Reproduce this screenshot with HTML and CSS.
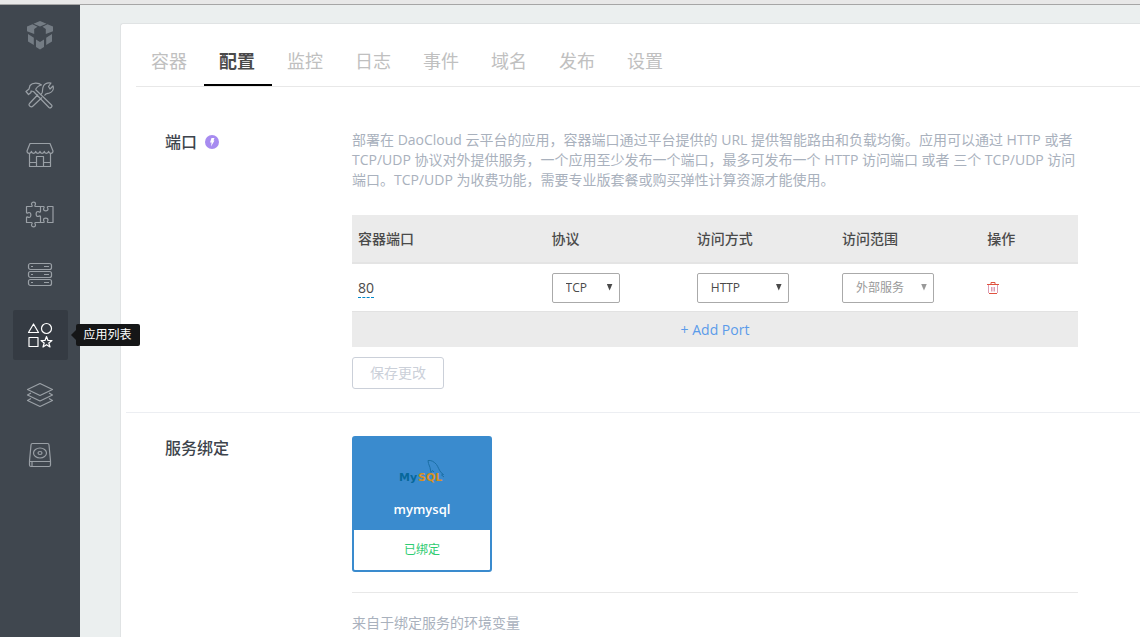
FILE: index.html
```html
<!DOCTYPE html>
<html lang="zh-CN">
<head>
<meta charset="utf-8">
<title>DaoCloud</title>
<link rel="stylesheet" href="styles.css">
</head>
<body>
<div class="topbar"></div>
<div class="app">
  <nav class="sidebar" aria-label="主导航">
    <a class="nav-item brand" href="#" aria-label="DaoCloud">
      <svg width="26" height="29" viewBox="0 0 26 29"><path d="M13 0l6.500 2.700L13 5.500 6.500 2.700zM0 5.500l5.500-2.300 5 2.600L7.200 8v5L0 10.200zM26 5.500l-5.500-2.300-5 2.600L18.800 8v5L26 10.200zM1 13l5.800 3.800V24L1 20.500zM25 13v7.500L19.200 24v-7.200zM9 18.500l4 2.500 4-2.500V26l-4 2.500L9 26z"/></svg>
    </a>
    <a class="nav-item" href="#" aria-label="构建">
      <svg width="30" height="28" viewBox="0 0 30 28"><path d="M10.500 8.500l16 15.500c1.400 1.500-1 3.800-2.500 2.500L8.500 10.500M10.500 8.500C12 6 13 4.500 16.500 4c-3-2.500-9-2.500-11.500.5L4 8 1 10.500 3.500 13.500 6 11.500l0-1.500 2.500 .5M17 12c1-2 0-4 1.500-7S23 1.500 26 2l-2.500 3.500L25 8l3-3c1 3-.5 6-3.500 7-2 .7-3.500 0-5 2.500M13 13.500l-8.500 9c-1.500 2 1.500 4.500 3.500 2.500l9-8.500M17 12l-1.500 2"/></svg>
    </a>
    <a class="nav-item" href="#" aria-label="镜像仓库">
      <svg width="28" height="26" viewBox="0 0 28 26"><path d="M4 1.500h20l3 7.500c0 3-4 3-4.400.4-.5 2.600-4 2.600-4.300 0-.5 2.600-4 2.600-4.300 0-.4 2.600-3.900 2.600-4.300 0-.4 2.600-3.900 2.600-4.300 0C5 12 1 12 1 9zM3.500 11.500v13h21v-13M10.500 24v-9.500h7V24M3.500 20.500h7M17.500 20.500h7"/></svg>
    </a>
    <a class="nav-item" href="#" aria-label="服务集成">
      <svg width="30" height="28" viewBox="0 0 30 28"><path d="M1.500 5.500h5c1.500-.5 0-1.500 0-2.500 0-2.500 4-2.500 4 0 0 1-1.500 2 0 2.500h8c1.500.5 0 1.500 0 2.500 0 2.500 4.500 2.500 4.500 0 0-1-1.500-2 0-2.500h5v16h-5c-1.500-.5 0-1.500 0-2.500 0-2.500-4.500-2.500-4.500 0 0 1 1.500 2 0 2.500h-8c-1.500.5 0 1.500 0 2.500 0 2.500-4 2.500-4 0 0-1 1.500-2 0-2.500h-5v-5c.5-1.500 1.500 0 2.500 0 2.500 0 2.500-5 0-5-1 0-2 1.500-2.500 0zM15.500 5.500v5c-.5 1.500-1.500 0-2.500 0-2.500 0-2.500 5 0 5 1 0 2-1.500 2.500 0v6"/></svg>
    </a>
    <a class="nav-item" href="#" aria-label="主机">
      <svg width="26" height="26" viewBox="0 0 26 26"><rect x="1.500" y="1.500" width="23" height="6" rx="2"/><rect x="1.500" y="9.500" width="23" height="6" rx="2"/><rect x="1.500" y="17.500" width="23" height="6" rx="2"/><path d="M4 4.500h2M17 4.500h5M4 12.500h2M17 12.500h5M4 20.500h2M17 20.500h5"/></svg>
    </a>
    <a class="nav-item active" href="#" aria-current="page" aria-describedby="nav-tip">
      <svg width="26" height="26" viewBox="0 0 26 26"><path d="M6.500 2l5 8.500h-10z"/><circle cx="19.500" cy="6.500" r="5"/><rect x="2" y="15.500" width="9" height="9"/><path d="M19.500 14.500l1.500 4h4l-3.200 2.500 1.200 4-3.500-2.300L16 25l1.200-4-3.200-2.500h4z"/></svg>
      <span class="tooltip" id="nav-tip" role="tooltip">应用列表</span>
    </a>
    <a class="nav-item" href="#" aria-label="堆栈">
      <svg width="28" height="26" viewBox="0 0 28 26"><path d="M14 1.500l12.500 6L14 13.500l-12.500-6zM5 11l-3.500 2L14 19l12.500-6L23 11M5 16.500l-3.500 2L14 24.500l12.500-6-3.500-2"/></svg>
    </a>
    <a class="nav-item" href="#" aria-label="存储">
      <svg width="24" height="26" viewBox="0 0 24 26"><path d="M4.500 1.500h15c1 0 1.500.5 1.500 1.500l1.500 16v4c0 1-.5 1.500-1.500 1.500H3c-1 0-1.500-.5-1.500-1.500v-4L3 3c0-1 .5-1.500 1.500-1.500zM1.500 19.500h21M4 20v4"/><ellipse cx="12" cy="11" rx="6.500" ry="5"/><ellipse cx="12" cy="11" rx="2" ry="1.500"/></svg>
    </a>
  </nav>
  <main class="main">
    <div class="panel">
      <nav class="tabs" aria-label="应用">
        <a class="tab" href="#">容器</a>
        <a class="tab selected" href="#" aria-current="page">配置</a>
        <a class="tab" href="#">监控</a>
        <a class="tab" href="#">日志</a>
        <a class="tab" href="#">事件</a>
        <a class="tab" href="#">域名</a>
        <a class="tab" href="#">发布</a>
        <a class="tab" href="#">设置</a>
      </nav>

      <section class="section">
        <h2 class="section-title">端口
          <svg class="bolt" width="14" height="14" viewBox="0 0 14 14"><circle cx="7" cy="7" r="7"/><path d="M6.500 3h3L8.500 5.500h1L6 11.500l.6-4H5z"/></svg>
        </h2>
        <div class="section-body">
          <p class="description">部署在 DaoCloud 云平台的应用，容器端口通过平台提供的 URL 提供智能路由和负载均衡。应用可以通过 HTTP 或者 TCP/UDP 协议对外提供服务，一个应用至少发布一个端口，最多可发布一个 HTTP 访问端口 或者 三个 TCP/UDP 访问端口。TCP/UDP 为收费功能，需要专业版套餐或购买弹性计算资源才能使用。</p>
          <table class="ports">
            <colgroup><col class="col-port"><col class="col-option"><col class="col-option"><col class="col-option"><col class="col-action"></colgroup>
            <thead>
              <tr><th>容器端口</th><th>协议</th><th>访问方式</th><th>访问范围</th><th>操作</th></tr>
            </thead>
            <tbody>
              <tr>
                <td><a class="port" href="#">80</a></td>
                <td><span class="select narrow"><select aria-label="协议"><option>TCP</option><option>UDP</option></select></span></td>
                <td><span class="select"><select aria-label="访问方式"><option>HTTP</option></select></span></td>
                <td><span class="select disabled"><select aria-label="访问范围" disabled><option>外部服务</option></select></span></td>
                <td><button class="delete" type="button" aria-label="删除"><svg width="12" height="12" viewBox="0 0 12 12"><path class="bin" d="M1.500 3v8M10.500 3v8M4.500 5v4.500M6 5v4.500M7.500 5v4.500"/><path d="M0 2.500h12M4 2V.5h4V2M2 11.500h8"/></svg></button></td>
              </tr>
            </tbody>
            <tfoot>
              <tr><td colspan="5"><button class="add" type="button">+ Add Port</button></td></tr>
            </tfoot>
          </table>
          <button class="save" type="button" disabled>保存更改</button>
        </div>
      </section>

      <section class="section services">
        <h2 class="section-title">服务绑定</h2>
        <div class="section-body">
          <a class="service" href="#">
            <span class="service-top">
              <svg class="logo" width="46" height="28" viewBox="0 0 46 28"><path class="dolphin" d="M32 13.500l-1-5-1.500-4-.5-3c3-.5 6 1 8.500 4 2 3 2.500 5.500 4.500 8l2.500 2-2 .5 2.500 2M32 13.500l1.500-2 1.500 1.500"/><text class="my" x="0" y="22">My</text><text class="sql" x="19" y="22">SQL</text></svg>
              <span class="service-name">mymysql</span>
            </span>
            <span class="service-state">已绑定</span>
          </a>
          <p class="env">来自于绑定服务的环境变量</p>
        </div>
      </section>
    </div>
  </main>
</div>
</body>
</html>
```
FILE: styles.css
```css
* { box-sizing: border-box; }

body {
  margin: 0;
  min-height: 100vh;
  display: flex;
  flex-direction: column;
  overflow: hidden;
  font-family: "Open Sans", "Noto Sans CJK SC", sans-serif;
  font-size: 14px;
  line-height: 20px;
  color: #4a4a4a;
  background: #ebefef;
}

a { color: inherit; text-decoration: none; }
button, select { font: inherit; color: inherit; }
p, h2 { margin: 0; }

.topbar {
  height: 5px;
  background: #e8e8e8;
  border-bottom: 1px solid #a6a6a6;
}

.app { display: flex; flex: 1; }

.sidebar {
  display: flex;
  flex-direction: column;
  align-items: center;
  gap: 10px;
  flex: 0 0 80px;
  padding-top: 5px;
  background: #40474f;
}

.nav-item {
  position: relative;
  display: flex;
  align-items: center;
  justify-content: center;
  width: 55px;
  height: 50px;
  border-radius: 2px;
}
.nav-item svg { fill: none; stroke: #9aa0a6; stroke-width: 1.2; stroke-linejoin: round; }
.brand svg { fill: #747c84; stroke: none; }
.active { background: #353b43; }
.active svg { stroke: #fff; }

.tooltip {
  position: absolute;
  left: 63px;
  top: 14px;
  z-index: 1;
  padding: 1px 8px;
  border-radius: 2px;
  font-size: 12px;
  white-space: nowrap;
  color: #fff;
  background: #151617;
}
.tooltip::before {
  content: "";
  position: absolute;
  left: -5px;
  top: 6px;
  border: 5px solid transparent;
  border-left: 0;
  border-right-color: #151617;
}

.main { flex: 1; min-width: 0; padding: 18px 0 0 40px; }

.panel {
  height: 100%;
  padding-left: 5px;
  border: 1px solid #e0e3e4;
  border-right: 0;
  border-bottom: 0;
  border-radius: 3px 0 0 0;
  background: #fff;
}

.tabs {
  display: flex;
  margin-left: 10px;
  padding-top: 22px;
  border-bottom: 1px solid #e8e8e8;
}
.tab {
  padding: 2px 17px 10px 15px;
  border-bottom: 2px solid transparent;
  font-size: 18px;
  line-height: 26px;
  color: #c0c0c0;
}
.selected { border-color: #000; font-weight: bold; color: #4a4a4a; }

.section {
  display: flex;
  padding: 43px 62px 23px 39px;
}
.services { padding-top: 23px; border-top: 1px solid #eceef2; }

.section-title {
  display: flex;
  align-items: center;
  gap: 8px;
  flex: 0 0 187px;
  align-self: flex-start;
  font-size: 16px;
  font-weight: 500;
  line-height: 24px;
  color: #3d444c;
}
.bolt { fill: #a78bf0; }
.bolt path { fill: #fff; }

.section-body { flex: 1; min-width: 0; }

.description { margin-bottom: 25px; color: #a9b1bd; }

.ports {
  width: 100%;
  table-layout: fixed;
  border-collapse: separate;
  border-spacing: 0;
  margin-bottom: 10px;
}
.col-port { width: calc(100% * 4 / 15); }
.col-option { width: 20%; }
.ports th {
  height: 49px;
  padding: 0 6px;
  border-bottom: 2px solid #e4e4e4;
  text-align: left;
  font-weight: 500;
  background: #ebebeb;
}
.ports td { height: 47px; padding: 0 6px; }
.ports tfoot td {
  height: 36px;
  border-top: 1px solid #e2e2e2;
  text-align: center;
  background: #ebebeb;
}

.port { display: inline-block; line-height: 18px; border-bottom: 1px dashed #0088cc; }

.select { position: relative; display: inline-block; width: 92px; vertical-align: middle; }
.narrow { width: 68px; }
.select select {
  display: block;
  width: 100%;
  height: 30px;
  padding: 0 13px;
  appearance: none;
  border: 1px solid #aaa;
  border-radius: 2px;
  font-size: 12px;
  background: #fff;
  opacity: 1;
}
.select::after {
  content: "";
  position: absolute;
  right: 7px;
  top: 11px;
  width: 6px;
  height: 7px;
  background: #4a4a4a;
  clip-path: polygon(0 0, 100% 0, 50% 100%);
}
.disabled { color: #999; }
.disabled::after { background: #999; }

.delete, .add { padding: 0; border: 0; background: none; }
.delete { display: block; }
.delete svg { display: block; fill: none; stroke: #e0523f; }
.delete .bin { stroke: #dd9db4; }
.add { color: #5b9bea; }

.save {
  display: block;
  width: 92px;
  height: 32px;
  padding: 0;
  border: 1px solid #cbd0d9;
  border-radius: 3px;
  color: #cbd0d9;
  background: #fff;
}

.service {
  display: flex;
  flex-direction: column;
  width: 140px;
  border: 2px solid #3a8bce;
  border-radius: 3px;
  text-align: center;
}
.service-top {
  display: flex;
  flex-direction: column;
  align-items: center;
  gap: 12px;
  padding: 21px 0 11px;
  color: #fff;
  background: #3a8bce;
}
.logo { font: bold 11px "DejaVu Sans", sans-serif; }
.my { fill: #07689a; }
.sql { fill: #d9901f; }
.dolphin { fill: none; stroke: #1b6fa5; }
.service-name { font-size: 13px; font-weight: 600; }
.service-state { padding: 10px 0; font-size: 12px; color: #2ecc71; }

.env {
  margin-top: 20px;
  padding-top: 20px;
  border-top: 1px solid #e8e8e8;
  color: #a9b1bd;
}
```
